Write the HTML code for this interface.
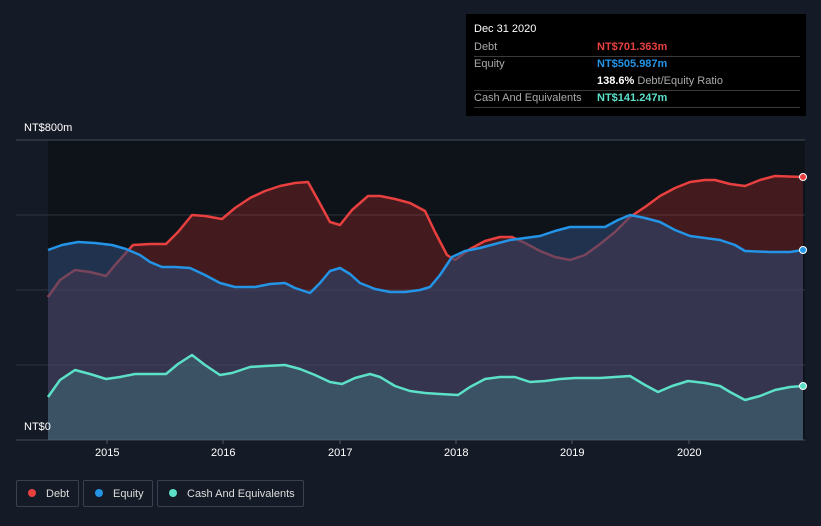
<!DOCTYPE html>
<html><head><meta charset="utf-8"><style>
body{margin:0;width:821px;height:526px;background:#151b26;font-family:"Liberation Sans",sans-serif;overflow:hidden;position:relative}
.t{position:absolute;color:#fff;font-size:11px}
.tip{position:absolute;left:466px;top:14px;width:340px;height:102px;background:#000;}
.row{position:absolute;left:8px;width:326px;border-bottom:1px solid #3a3a3a;font-size:11px;color:#aaa;height:17px;line-height:17px}
.leg{position:absolute;top:480px;height:27px;border:1px solid #3a4050;border-radius:2px;color:#ddd;font-size:11px;line-height:27px;box-sizing:border-box}
.leg i{display:inline-block;width:8px;height:8px;border-radius:50%;margin:0 10px 0 11px;vertical-align:-0px}
</style></head><body>
<svg width="821" height="526" style="position:absolute;left:0;top:0">
<rect x="48" y="140" width="757" height="300" fill="#0e1219"/>
<g stroke="#2e3440" stroke-width="1"><line x1="16" y1="140" x2="805" y2="140" stroke="#444a55"/><line x1="16" y1="215" x2="805" y2="215"/><line x1="16" y1="290" x2="805" y2="290"/><line x1="16" y1="365" x2="805" y2="365"/><line x1="16" y1="440" x2="805" y2="440" stroke="#444a55"/></g>
<polygon fill="rgba(229,57,53,0.25)" points="48,440 48,297 60,280 75,270 90,272 106,276 115,265 133,245 150,244 166,244 178,232 192,215 205,216 222,219 235,208 250,198 265,191 280,186 295,183 308,182 318,200 330,222 340,225 352,210 368,196 380,196 395,199 410,203 425,211 435,232 447,255 455,260 470,249 485,241 500,237 512,237 525,243 540,251 555,257 570,260 585,255 600,244 615,232 630,217 645,207 660,196 675,188 690,182 705,180 715,180 730,184 745,186 760,180 775,176 803,177 803,440"/>
<polyline fill="none" stroke="#e8403f" stroke-width="2.5" stroke-linejoin="round" points="48,297 60,280 75,270 90,272 106,276 115,265 133,245 150,244 166,244 178,232 192,215 205,216 222,219 235,208 250,198 265,191 280,186 295,183 308,182 318,200 330,222 340,225 352,210 368,196 380,196 395,199 410,203 425,211 435,232 447,255 455,260 470,249 485,241 500,237 512,237 525,243 540,251 555,257 570,260 585,255 600,244 615,232 630,217 645,207 660,196 675,188 690,182 705,180 715,180 730,184 745,186 760,180 775,176 803,177"/>
<polygon fill="rgba(45,72,112,0.6)" points="48,440 48,250 62,245 78,242 95,243 112,245 126,249 140,255 150,262 162,267 175,267 190,268 205,275 220,283 235,287 255,287 270,284 285,283 295,288 310,293 320,283 330,271 340,268 350,274 360,283 375,289 390,292 405,292 420,290 430,287 440,275 452,257 465,251 480,248 495,244 510,240 525,238 540,236 555,231 570,227 590,227 605,227 618,220 630,215 645,218 660,222 675,230 690,236 705,238 720,240 735,245 745,251 770,252 790,252 803,250 803,440"/>
<polyline fill="none" stroke="#2394e6" stroke-width="2.5" stroke-linejoin="round" points="48,250 62,245 78,242 95,243 112,245 126,249 140,255 150,262 162,267 175,267 190,268 205,275 220,283 235,287 255,287 270,284 285,283 295,288 310,293 320,283 330,271 340,268 350,274 360,283 375,289 390,292 405,292 420,290 430,287 440,275 452,257 465,251 480,248 495,244 510,240 525,238 540,236 555,231 570,227 590,227 605,227 618,220 630,215 645,218 660,222 675,230 690,236 705,238 720,240 735,245 745,251 770,252 790,252 803,250"/>
<polygon fill="rgba(80,200,180,0.2)" points="48,440 48,397 60,380 75,370 90,374 106,379 120,377 135,374 150,374 166,374 178,364 192,355 205,365 220,375 232,373 250,367 265,366 285,365 300,369 315,375 330,382 342,384 355,378 370,374 380,377 395,386 410,391 425,393 440,394 458,395 470,387 485,379 500,377 515,377 530,382 545,381 560,379 575,378 600,378 615,377 630,376 645,385 658,392 672,386 688,381 705,383 720,386 730,392 745,400 760,396 775,390 790,387 803,386 803,440"/>
<polyline fill="none" stroke="#5ce0c8" stroke-width="2.5" stroke-linejoin="round" points="48,397 60,380 75,370 90,374 106,379 120,377 135,374 150,374 166,374 178,364 192,355 205,365 220,375 232,373 250,367 265,366 285,365 300,369 315,375 330,382 342,384 355,378 370,374 380,377 395,386 410,391 425,393 440,394 458,395 470,387 485,379 500,377 515,377 530,382 545,381 560,379 575,378 600,378 615,377 630,376 645,385 658,392 672,386 688,381 705,383 720,386 730,392 745,400 760,396 775,390 790,387 803,386"/>
<circle cx="803" cy="177" r="3.5" fill="#e8403f" stroke="#fff" stroke-width="1"/>
<circle cx="803" cy="250" r="3.5" fill="#2394e6" stroke="#fff" stroke-width="1"/>
<circle cx="803" cy="386" r="3.5" fill="#5ce0c8" stroke="#fff" stroke-width="1"/>
<g stroke="#555" ><line x1="107" y1="440" x2="107" y2="444"/><line x1="223" y1="440" x2="223" y2="444"/><line x1="340" y1="440" x2="340" y2="444"/><line x1="456" y1="440" x2="456" y2="444"/><line x1="572" y1="440" x2="572" y2="444"/><line x1="689" y1="440" x2="689" y2="444"/></g>
</svg>
<div class="t" style="left:24px;top:122px">NT$800m</div>
<div class="t" style="left:24px;top:421px">NT$0</div>
<div class="t" style="left:95px;top:447px">2015</div>
<div class="t" style="left:211px;top:447px">2016</div>
<div class="t" style="left:328px;top:447px">2017</div>
<div class="t" style="left:444px;top:447px">2018</div>
<div class="t" style="left:560px;top:447px">2019</div>
<div class="t" style="left:677px;top:447px">2020</div>
<div class="tip">
<div style="position:absolute;left:8px;top:9px;color:#fff;font-size:11px">Dec 31 2020</div>
<div class="row" style="top:25px">Debt<span style="position:absolute;left:123px;color:#e8403f;font-weight:bold">NT$701.363m</span></div>
<div class="row" style="top:42px;border:none">Equity<span style="position:absolute;left:123px;color:#2394e6;font-weight:bold">NT$505.987m</span></div>
<div class="row" style="top:59px"><span style="position:absolute;left:123px"><b style="color:#fff">138.6%</b> Debt/Equity Ratio</span></div>
<div class="row" style="top:76px">Cash And Equivalents<span style="position:absolute;left:123px;color:#5ce0c8;font-weight:bold">NT$141.247m</span></div>
</div>
<div class="leg" style="left:16px;width:63px"><i style="background:#e8403f"></i>Debt</div>
<div class="leg" style="left:83px;width:70px"><i style="background:#2394e6"></i>Equity</div>
<div class="leg" style="left:157px;width:147px"><i style="background:#5ce0c8"></i>Cash And Equivalents</div>
</body></html>
